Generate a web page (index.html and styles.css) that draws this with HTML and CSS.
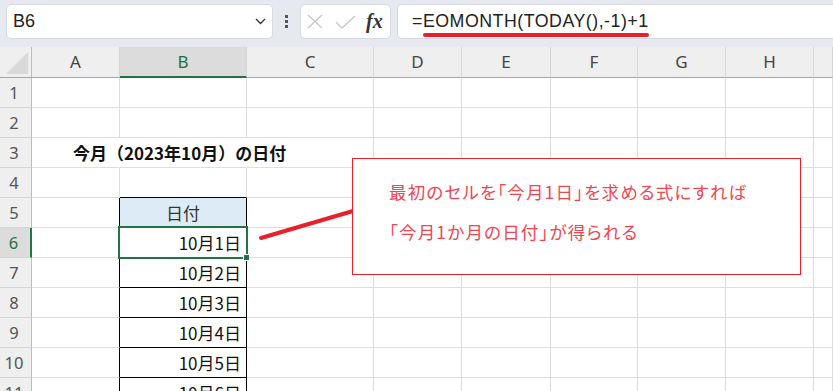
FILE: index.html
```html
<!DOCTYPE html>
<html lang="ja">
<head>
    <meta charset="UTF-8">
    <meta name="viewport" content="width=device-width, initial-scale=1.0">
    <title>EOMONTH</title>
    <link rel="stylesheet" href="styles.css">
</head>
<body>
    <!-- 数式バー -->
    <div class="toolbar">
        <div class="namebox">
            <span class="ref">B6</span>
            <svg class="chev" width="11" height="7" viewBox="0 0 11 7"><path d="M1 1 L5.5 5.5 L10 1" fill="none" stroke="#333" stroke-width="1.3"/></svg>
        </div>
        <div class="grip"><i></i><i></i><i></i></div>
        <div class="fxbox">
            <svg width="16" height="15" viewBox="0 0 16 15"><path d="M1 1 L15 14 M15 1 L1 14" stroke="#c8c8c8" stroke-width="1.4" fill="none"/></svg>
            <svg width="21" height="14" viewBox="0 0 21 14"><path d="M1 7 L7 13 L20 1" stroke="#c8c8c8" stroke-width="1.4" fill="none"/></svg>
            <span class="fx">fx</span>
        </div>
        <div class="formula">
            <span>=</span><span class="mark">EOMONTH(TODAY(),-1)+1</span>
        </div>
    </div>

    <!-- シート -->
    <div class="sheet">
        <div class="corner"><svg width="22" height="22" viewBox="0 0 22 22"><path d="M22 0 L22 22 L0 22 Z" fill="#d9d9d9"/></svg></div>
        <div class="ch">A</div><div class="ch sel">B</div><div class="ch">C</div><div class="ch">D</div><div class="ch">E</div><div class="ch">F</div><div class="ch">G</div><div class="ch">H</div><div class="ch last"></div>

        <div class="rh">1</div><div class="c"></div><div class="c"></div><div class="c"></div><div class="c"></div><div class="c"></div><div class="c"></div><div class="c"></div><div class="c"></div><div class="c"></div>
        <div class="rh">2</div><div class="c"></div><div class="c"></div><div class="c"></div><div class="c"></div><div class="c"></div><div class="c"></div><div class="c"></div><div class="c"></div><div class="c"></div>
        <div class="rh">3</div><div class="c nr title">今月（2023年10月）の日付</div><div class="c nr"></div><div class="c"></div><div class="c"></div><div class="c"></div><div class="c"></div><div class="c"></div><div class="c"></div><div class="c"></div>
        <div class="rh">4</div><div class="c"></div><div class="c bb"></div><div class="c"></div><div class="c"></div><div class="c"></div><div class="c"></div><div class="c"></div><div class="c"></div><div class="c"></div>
        <div class="rh">5</div><div class="c br"></div><div class="c br bb hd">日付</div><div class="c"></div><div class="c"></div><div class="c"></div><div class="c"></div><div class="c"></div><div class="c"></div><div class="c"></div>
        <div class="rh sel">6</div><div class="c br"></div><div class="c br bb num cur">10月1日</div><div class="c"></div><div class="c"></div><div class="c"></div><div class="c"></div><div class="c"></div><div class="c"></div><div class="c"></div>
        <div class="rh">7</div><div class="c br"></div><div class="c br bb num">10月2日</div><div class="c"></div><div class="c"></div><div class="c"></div><div class="c"></div><div class="c"></div><div class="c"></div><div class="c"></div>
        <div class="rh">8</div><div class="c br"></div><div class="c br bb num">10月3日</div><div class="c"></div><div class="c"></div><div class="c"></div><div class="c"></div><div class="c"></div><div class="c"></div><div class="c"></div>
        <div class="rh">9</div><div class="c br"></div><div class="c br bb num">10月4日</div><div class="c"></div><div class="c"></div><div class="c"></div><div class="c"></div><div class="c"></div><div class="c"></div><div class="c"></div>
        <div class="rh">10</div><div class="c br"></div><div class="c br bb num">10月5日</div><div class="c"></div><div class="c"></div><div class="c"></div><div class="c"></div><div class="c"></div><div class="c"></div><div class="c"></div>
        <div class="rh">11</div><div class="c br"></div><div class="c br bb num">10月6日</div><div class="c"></div><div class="c"></div><div class="c"></div><div class="c"></div><div class="c"></div><div class="c"></div><div class="c"></div>

        <!-- 吹き出し -->
        <svg class="arrow" width="105" height="45" viewBox="0 0 105 45"><line x1="6" y1="38" x2="98" y2="11" stroke="#e8202a" stroke-width="4" stroke-linecap="round"/></svg>
        <div class="callout">
            <p>最初のセルを「今月1日」を求める式にすれば</p>
            <p>「今月1か月の日付」が得られる</p>
        </div>
    </div>
</body>
</html>
```

FILE: styles.css
```css
body {
    margin: 0;
    overflow: hidden;
    background-color: #fff;
    font-family: "Noto Sans CJK JP", sans-serif;
}
.toolbar {
    display: flex;
    height: 47px;
    box-sizing: border-box;
    padding: 4px 0 0 6px;
    background-color: #e6e9ef;
}
.namebox,
.fxbox,
.formula {
    display: flex;
    align-items: center;
    height: 35px;
    box-sizing: border-box;
    background-color: #fff;
    border: 1px solid #d6d9df;
    border-radius: 5px;
}
.namebox {
    width: 267px;
    justify-content: space-between;
    padding: 0 6px 0 6px;
}
.ref {
    font-family: "Liberation Sans", sans-serif;
    font-size: 18px;
    color: #222;
}
.grip {
    width: 27px;
    height: 35px;
    display: flex;
    flex-direction: column;
    align-items: center;
    justify-content: center;
    gap: 2px;
}
.grip i {
    width: 3px;
    height: 3px;
    background-color: #555;
}
.fxbox {
    width: 91px;
    padding: 0 5px 0 6px;
    gap: 12px;
}
.fx {
    font-family: "Liberation Serif", serif;
    font-style: italic;
    font-weight: bold;
    font-size: 20px;
    color: #333;
    margin-left: -2px;
}
.formula {
    flex: 1;
    margin: 0 -10px 0 6px;
    padding-left: 14px;
    font-family: "Liberation Sans", sans-serif;
    font-size: 17.8px;
    letter-spacing: 0.5px;
    color: #222;
    border-right: none;
}
.mark {
    position: relative;
}
.mark::after {
    content: "";
    position: absolute;
    left: 0;
    right: 0;
    bottom: -5px;
    height: 4px;
    border-radius: 2px;
    background-color: #e8202a;
}

/* grid */
.sheet {
    position: relative;
    display: grid;
    grid-template-columns: 32px 88px 127px 127px 88px 89px 87px 88px 88px 1fr;
    grid-template-rows: 31px repeat(11, 30px);
    height: 344px;
    overflow: hidden;
}
.sheet > div {
    box-sizing: border-box;
}
.corner {
    background-color: #efefef;
    border-right: 1px solid #bdbdbd;
    border-bottom: 1px solid #a6a6a6;
    padding: 5px 0 0 6px;
}
.corner svg {
    display: block;
}
.ch {
    background-color: #efefef;
    border-right: 1px solid #d4d4d4;
    border-bottom: 1px solid #a6a6a6;
    text-align: center;
    line-height: 30px;
    font-family: "Noto Sans", sans-serif;
    font-size: 17px;
    color: #444;
}
.ch.sel {
    background-color: #dcdcdc;
    border-bottom: 2px solid #217346;
    color: #217346;
}
.rh {
    background-color: #efefef;
    border-right: 1px solid #bdbdbd;
    border-bottom: 1px solid #d4d4d4;
    text-align: center;
    padding-right: 3px;
    line-height: 29px;
    font-family: "Noto Sans", sans-serif;
    font-size: 16.5px;
    color: #555;
}
.rh.sel {
    background-color: #dcdcdc;
    border-right: 2px solid #217346;
    color: #217346;
}
.c {
    border-right: 1px solid #dedede;
    border-bottom: 1px solid #dedede;
    font-size: 17px;
    line-height: 29px;
    color: #111;
    white-space: nowrap;
}
.c.nr {
    border-right-color: transparent;
}
.c.br {
    border-right-color: #000;
}
.c.bb {
    border-bottom-color: #000;
}
.title {
    font-weight: bold;
    padding-left: 41px;
    overflow: visible;
    position: relative;
    z-index: 1;
}
.hd {
    background-color: #ddebf7;
    text-align: center;
    color: #333;
}
.num {
    text-align: right;
    padding-right: 5px;
}
.cur {
    position: relative;
}
.cur::before {
    content: "";
    position: absolute;
    top: -2px;
    left: -2px;
    right: -2px;
    bottom: -2px;
    border: 2px solid #217346;
}
.cur::after {
    content: "";
    position: absolute;
    right: -4px;
    bottom: -4px;
    width: 5px;
    height: 5px;
    background-color: #217346;
    border: 1px solid #fff;
}
.arrow {
    position: absolute;
    left: 255px;
    top: 153px;
}
.callout {
    position: absolute;
    left: 352px;
    top: 111px;
    width: 449px;
    height: 117px;
    box-sizing: border-box;
    border: 1px solid #e8202a;
    background-color: #fff;
    padding: 13px 0 0 36px;
    color: #ef4651;
    font-size: 17.5px;
    line-height: 40px;
    font-feature-settings: "palt";
    letter-spacing: 1.2px;
}
.callout p {
    margin: 0;
}
```
